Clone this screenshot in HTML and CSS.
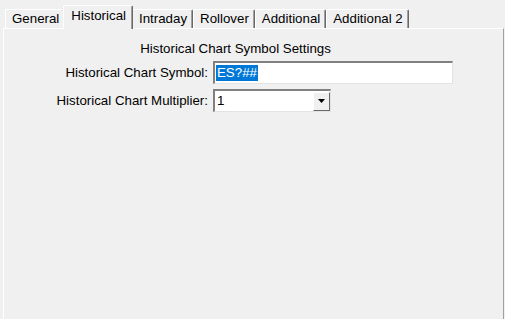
FILE: index.html
```html
<!DOCTYPE html>
<html lang="en">
<head>
    <meta charset="UTF-8">
    <title>Symbol Settings</title>
    <link rel="stylesheet" href="styles.css">
</head>
<body>
    <div class="tabs">
        <div class="tab">General</div>
        <div class="tab active">Historical</div>
        <div class="tab">Intraday</div>
        <div class="tab">Rollover</div>
        <div class="tab">Additional</div>
        <div class="tab">Additional 2</div>
    </div>

    <div class="panel">
        <div class="section-title">Historical Chart Symbol Settings</div>
        <div class="form">
            <label class="field-label">Historical Chart Symbol:</label>
            <div class="textbox"><span class="selected">ES?##</span></div>

            <label class="field-label">Historical Chart Multiplier:</label>
            <div class="combo">
                <span class="combo-value">1</span>
                <span class="combo-btn">
                    <svg width="7" height="4" viewBox="0 0 7 4"><path d="M0 0h7L3.5 4z" fill="#000"/></svg>
                </span>
            </div>
        </div>
    </div>
</body>
</html>
```

FILE: styles.css
```css
html, body {
    margin: 0;
    height: 100%;
}
body {
    background: #f0f0f0;
    font-family: 'Liberation Sans', Arial, sans-serif;
    font-size: 13.3px;
    color: #000;
    overflow: hidden;
}
.tabs {
    display: flex;
    align-items: flex-end;
    height: 28px;
    padding-left: 5px;
}
.tab {
    box-sizing: border-box;
    height: 19px;
    line-height: 18px;
    padding: 0 5px 0 6px;
    border-top: 1px solid #fff;
    border-left: 1px solid #fff;
    border-right: 1px solid #696969;
    box-shadow: inset -1px 0 0 #a0a0a0;
    border-radius: 2px 2px 0 0;
}
.tab.active {
    position: relative;
    z-index: 1;
    height: 24px;
    line-height: 20px;
    margin: 0 -1px -1px -2px;
    padding: 0 6px 0 7px;
    background: #f0f0f0;
}
.panel {
    height: calc(100% - 29px);
    margin: 0 1px 0 3px;
    border-top: 1px solid #fff;
    border-left: 1px solid #fff;
    border-right: 1px solid #a0a0a0;
}
.section-title {
    text-align: center;
    margin-top: 12px;
    padding-right: 36px;
    line-height: 16px;
}
.form {
    display: grid;
    grid-template-columns: 204px auto;
    column-gap: 5px;
    row-gap: 5px;
    margin-top: 4px;
    align-items: center;
}
.field-label {
    text-align: right;
}
.textbox, .combo {
    box-sizing: border-box;
    height: 23px;
    background: #fff;
    border-top: 2px solid #808080;
    border-left: 2px solid #808080;
    border-right: 1px solid #e3e3e3;
    border-bottom: 1px solid #e3e3e3;
    display: flex;
    align-items: center;
}
.textbox {
    width: 240px;
    padding-left: 1px;
}
.selected {
    background: #0078d7;
    color: #fff;
    line-height: 16px;
    padding: 0 1px;
}
.combo {
    width: 118px;
    justify-content: space-between;
    padding-left: 2px;
}
.combo-value {
    line-height: 16px;
}
.combo-btn {
    box-sizing: border-box;
    width: 17px;
    height: 19px;
    background: #f0f0f0;
    border-top: 1px solid #fff;
    border-left: 1px solid #fff;
    border-right: 1px solid #696969;
    border-bottom: 1px solid #696969;
    display: flex;
    align-items: center;
    justify-content: center;
}
```
